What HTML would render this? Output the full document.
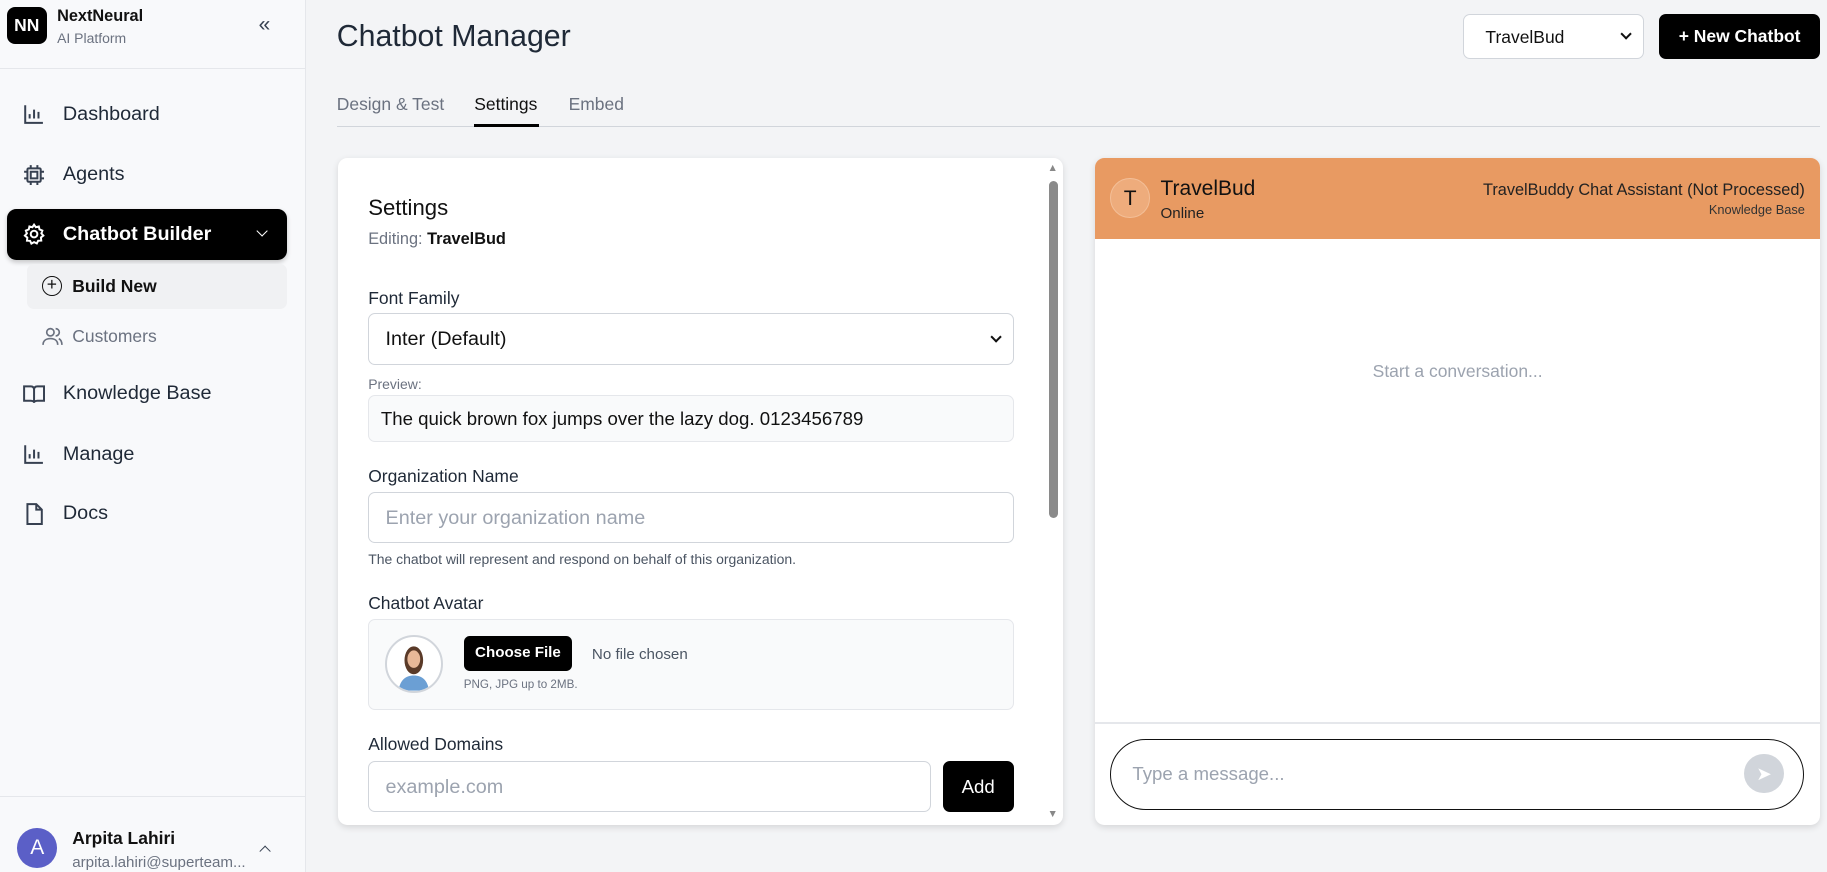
<!DOCTYPE html>
<html><head><meta charset="utf-8"><style>
*{box-sizing:border-box;margin:0;padding:0}
html,body{width:1827px;height:872px;overflow:hidden;background:#f3f4f6;font-family:"Liberation Sans",sans-serif}
#w{zoom:1.16518;width:1568px;height:748px;position:relative}
.a{position:absolute}
.sb{left:0;top:0;width:263px;height:748px;background:#f8f9fb;border-right:1px solid #e5e7eb}
.nav{left:20px;font-size:17px;color:#1f2937;display:flex;align-items:center;gap:15px}
.nav svg{width:19px;height:19px;fill:none;stroke:#374151;stroke-width:1.8}
.lbl{font-size:15px;color:#1f2937}
.inp{border:1px solid #d1d5db;border-radius:6px;background:#fff}
.card{background:#fff;border-radius:8px;box-shadow:0 2px 6px rgba(0,0,0,.12)}
.chev{position:absolute;width:8px;height:8px;border-right:1.8px solid #111;border-bottom:1.8px solid #111;transform:rotate(45deg)}
</style></head><body><div id="w">
<div class="a sb"></div>
<div class="a" style="left:6px;top:6px;width:34px;height:32px;background:#000;border-radius:7px;color:#fff;font-weight:bold;font-size:15px;line-height:32px;text-align:center">NN</div>
<div class="a" style="left:49px;top:6px;font-weight:bold;font-size:14px;color:#111">NextNeural</div>
<div class="a" style="left:49px;top:26px;font-size:12px;color:#6b7280">AI Platform</div>
<div class="a" style="left:222px;top:11px;font-size:18px;color:#374151">«</div>
<div class="a" style="left:0;top:58px;width:263px;height:1px;background:#e5e7eb"></div>

<div class="a nav" style="top:88px"><svg viewBox="0 0 20 20"><path d="M2 2v16h16M6 14v-4M10 14V6M14 14v-6"/></svg>Dashboard</div>
<div class="a nav" style="top:140px"><svg viewBox="0 0 20 20"><rect x="4" y="4" width="12" height="12" rx="1"/><rect x="7" y="7" width="6" height="6"/><path d="M7 1v3M13 1v3M7 16v3M13 16v3M1 7h3M1 13h3M16 7h3M16 13h3"/></svg>Agents</div>
<div class="a" style="left:6px;top:179px;width:240px;height:44px;background:#000;border-radius:8px;box-shadow:0 2px 4px rgba(0,0,0,.2)"></div>
<div class="a nav" style="top:191px;color:#fff;font-weight:bold"><svg viewBox="0 0 20 20" style="stroke:#fff"><circle cx="10" cy="10" r="3"/><path d="M10 1.5l1.6 2.3 2.7-.7.6 2.7 2.6 1-.9 2.6 1.8 2-2.2 1.7.3 2.8-2.8.1-1.2 2.5L10 17.3l-2.4 1.3-1.2-2.5-2.8-.1.3-2.8L1.7 11.4l1.8-2-.9-2.6 2.6-1 .6-2.7 2.7.7z"/></svg>Chatbot Builder</div>
<div class="chev" style="left:221px;top:195px;border-color:#fff;width:7px;height:7px;border-width:1.6px"></div>
<div class="a" style="left:23px;top:227px;width:223px;height:38px;background:#f0f1f3;border-radius:6px"></div>
<div class="a" style="left:36px;top:237px;width:17px;height:17px;border:1.6px solid #111;border-radius:50%;text-align:center;line-height:13px;font-size:15px;color:#111">+</div>
<div class="a" style="left:62px;top:237px;font-size:15px;font-weight:bold;color:#111">Build New</div>
<div class="a" style="left:36px;top:280px"><svg width="18" height="18" viewBox="0 0 20 20" fill="none" stroke="#6b7280" stroke-width="1.6"><circle cx="8" cy="6" r="3.5"/><path d="M1 18c0-4 3-6 7-6s7 2 7 6M13 2.5a3.5 3.5 0 010 7M16 12c2 1 3 3 3 6"/></svg></div>
<div class="a" style="left:62px;top:280px;font-size:15px;color:#6b7280">Customers</div>
<div class="a nav" style="top:328px"><svg viewBox="0 0 20 20"><path d="M1 3h6c2 0 3 1 3 3v12c0-1-1-2-3-2H1zM19 3h-6c-2 0-3 1-3 3v12c0-1 1-2 3-2h6z"/></svg>Knowledge Base</div>
<div class="a nav" style="top:380px"><svg viewBox="0 0 20 20"><path d="M2 2v16h16M6 14v-4M10 14V6M14 14v-6"/></svg>Manage</div>
<div class="a nav" style="top:431px"><svg viewBox="0 0 20 20"><path d="M4 1h8l5 5v13H4zM12 1v5h5"/></svg>Docs</div>

<div class="a" style="left:0;top:683px;width:263px;height:1px;background:#e5e7eb"></div>
<div class="a" style="left:15px;top:711px;width:34px;height:34px;border-radius:50%;background:#5b5fc7;color:#fff;text-align:center;line-height:34px;font-size:18px">A</div>
<div class="a" style="left:62px;top:711px;font-size:15px;font-weight:bold;color:#111">Arpita Lahiri</div>
<div class="a" style="left:62px;top:733px;font-size:13px;color:#6b7280">arpita.lahiri@superteam...</div>
<div class="chev" style="left:224px;top:727px;transform:rotate(-135deg);border-color:#374151;width:7px;height:7px;border-width:1.5px"></div>

<div class="a" style="left:289px;top:17px;font-size:26px;color:#1f2937">Chatbot Manager</div>
<div class="a inp" style="left:1256px;top:12px;width:155px;height:39px;border-radius:6px;font-size:15px;color:#111;padding:10px 18px">TravelBud</div>
<div class="chev" style="left:1392px;top:26px;width:7px;height:7px"></div>
<div class="a" style="left:1424px;top:12px;width:138px;height:39px;background:#000;border-radius:6px;color:#fff;font-weight:bold;font-size:15px;text-align:center;line-height:39px">+ New Chatbot</div>
<div class="a" style="left:289px;top:81px;font-size:15px;color:#6b7280">Design &amp; Test</div>
<div class="a" style="left:407px;top:81px;font-size:15px;color:#111">Settings</div>
<div class="a" style="left:488px;top:81px;font-size:15px;color:#6b7280">Embed</div>
<div class="a" style="left:289px;top:108px;width:1273px;height:1px;background:#d1d5db"></div>
<div class="a" style="left:407px;top:106px;width:56px;height:3px;background:#000"></div>

<div class="a card" style="left:290px;top:136px;width:622px;height:572px"></div>
<div class="a" style="left:900px;top:155px;width:8px;height:290px;background:#8a8a8a;border-radius:4px"></div>
<div class="a" style="left:899px;top:140px;font-size:9px;color:#888">▲</div>
<div class="a" style="left:899px;top:694px;font-size:9px;color:#888">▼</div>
<div class="a" style="left:316px;top:167px;font-size:19px;color:#111">Settings</div>
<div class="a" style="left:316px;top:197px;font-size:14px;color:#6b7280">Editing: <b style="color:#111">TravelBud</b></div>
<div class="a lbl" style="left:316px;top:247px">Font Family</div>
<div class="a inp" style="left:316px;top:269px;width:554px;height:44px;font-size:17px;color:#111;padding:12px 14px">Inter (Default)</div>
<div class="chev" style="left:851px;top:286px;width:7px;height:7px"></div>
<div class="a" style="left:316px;top:323px;font-size:12px;color:#6b7280">Preview:</div>
<div class="a" style="left:316px;top:339px;width:554px;height:40px;background:#f9fafb;border:1px solid #e5e7eb;border-radius:6px;font-size:16px;color:#111;padding:10px 10px">The quick brown fox jumps over the lazy dog. 0123456789</div>
<div class="a lbl" style="left:316px;top:400px">Organization Name</div>
<div class="a inp" style="left:316px;top:422px;width:554px;height:44px;font-size:17px;color:#9ca3af;padding:12px 14px">Enter your organization name</div>
<div class="a" style="left:316px;top:473px;font-size:12px;color:#4b5563">The chatbot will represent and respond on behalf of this organization.</div>
<div class="a lbl" style="left:316px;top:509px">Chatbot Avatar</div>
<div class="a" style="left:316px;top:531px;width:554px;height:78px;background:#f9fafb;border:1px solid #e5e7eb;border-radius:6px"></div>
<div class="a" style="left:330px;top:545px;width:50px;height:50px;border-radius:50%;border:2px solid #d1d5db;background:#fff;overflow:hidden"><svg width="46" height="46" viewBox="0 0 46 46"><ellipse cx="23" cy="20" rx="8" ry="12" fill="#5a3a28"/><ellipse cx="23" cy="19" rx="5.5" ry="7.5" fill="#e8b898"/><path d="M10 46c1-9 6-13 13-13s12 4 13 13z" fill="#6b9fd4"/></svg></div>
<div class="a" style="left:398px;top:546px;width:93px;height:30px;background:#000;border-radius:5px;color:#fff;font-weight:bold;font-size:13px;text-align:center;line-height:30px">Choose File</div>
<div class="a" style="left:508px;top:554px;font-size:13px;color:#4b5563">No file chosen</div>
<div class="a" style="left:398px;top:582px;font-size:10px;color:#6b7280">PNG, JPG up to 2MB.</div>
<div class="a lbl" style="left:316px;top:630px">Allowed Domains</div>
<div class="a inp" style="left:316px;top:653px;width:483px;height:44px;font-size:17px;color:#9ca3af;padding:12px 14px">example.com</div>
<div class="a" style="left:809px;top:653px;width:61px;height:44px;background:#000;border-radius:6px;color:#fff;font-size:16px;text-align:center;line-height:44px">Add</div>

<div class="a card" style="left:940px;top:136px;width:622px;height:572px;overflow:hidden">
<div style="height:69px;background:#e89a62;position:relative">
<div class="a" style="left:13px;top:17px;width:34px;height:34px;border-radius:50%;background:#eeac7c;border:1px solid #f3bf98;text-align:center;line-height:34px;font-size:18px;color:#111">T</div>
<div class="a" style="left:56px;top:16px;font-size:18px;color:#111">TravelBud</div>
<div class="a" style="left:56px;top:40px;font-size:13px;color:#222">Online</div>
<div class="a" style="right:13px;top:19px;font-size:14px;color:#222">TravelBuddy Chat Assistant (Not Processed)</div>
<div class="a" style="right:13px;top:37px;font-size:11px;color:#333">Knowledge Base</div>
</div>
<div class="a" style="left:0;width:622px;top:174px;font-size:15px;color:#9ca3af;text-align:center">Start a conversation...</div>
<div class="a" style="left:0;top:484px;width:622px;height:1px;background:#e5e7eb"></div>
<div class="a" style="left:13px;top:498px;width:595px;height:61px;border:1.5px solid #111;border-radius:31px;font-size:16px;color:#9ca3af;padding:20px 18px">Type a message...</div>
<div class="a" style="left:557px;top:511px;width:34px;height:34px;border-radius:50%;background:#d1d5db;color:#fff;text-align:center;line-height:34px;font-size:16px">&#10148;</div>
</div>
</div></body></html>
